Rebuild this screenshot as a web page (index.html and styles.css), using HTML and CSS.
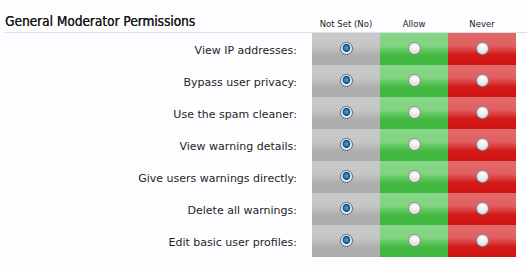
FILE: index.html
```html
<!DOCTYPE html>
<html>
<head>
<meta charset="utf-8">
<link rel="stylesheet" href="styles.css">
</head>
<body>
<div class="perms">
  <div class="head">
    <h3 class="title">General Moderator Permissions</h3>
    <div class="colhead">Not Set (No)</div>
    <div class="colhead">Allow</div>
    <div class="colhead">Never</div>
  </div>
  <div class="row">
    <div class="label">View IP addresses:</div>
    <div class="cell unset"><span class="radio on"></span></div>
    <div class="cell allow"><span class="radio"></span></div>
    <div class="cell never"><span class="radio"></span></div>
  </div>
  <div class="row">
    <div class="label">Bypass user privacy:</div>
    <div class="cell unset"><span class="radio on"></span></div>
    <div class="cell allow"><span class="radio"></span></div>
    <div class="cell never"><span class="radio"></span></div>
  </div>
  <div class="row">
    <div class="label">Use the spam cleaner:</div>
    <div class="cell unset"><span class="radio on"></span></div>
    <div class="cell allow"><span class="radio"></span></div>
    <div class="cell never"><span class="radio"></span></div>
  </div>
  <div class="row">
    <div class="label">View warning details:</div>
    <div class="cell unset"><span class="radio on"></span></div>
    <div class="cell allow"><span class="radio"></span></div>
    <div class="cell never"><span class="radio"></span></div>
  </div>
  <div class="row">
    <div class="label">Give users warnings directly:</div>
    <div class="cell unset"><span class="radio on"></span></div>
    <div class="cell allow"><span class="radio"></span></div>
    <div class="cell never"><span class="radio"></span></div>
  </div>
  <div class="row">
    <div class="label">Delete all warnings:</div>
    <div class="cell unset"><span class="radio on"></span></div>
    <div class="cell allow"><span class="radio"></span></div>
    <div class="cell never"><span class="radio"></span></div>
  </div>
  <div class="row">
    <div class="label">Edit basic user profiles:</div>
    <div class="cell unset"><span class="radio on"></span></div>
    <div class="cell allow"><span class="radio"></span></div>
    <div class="cell never"><span class="radio"></span></div>
  </div>
</div>
</body>
</html>
```
FILE: styles.css
```css
html, body {
  margin: 0;
  background: #fdfdff;
}
.perms {
  padding-left: 5px;
  font-family: "DejaVu Sans", Tahoma, sans-serif;
  color: #1a1a1a;
}
.head {
  display: flex;
  align-items: flex-end;
  height: 32px;
  border-bottom: 1px solid #d3e2ee;
}
.title {
  margin: 0;
  width: 307px;
  font-family: "DejaVu Sans Condensed", "DejaVu Sans", sans-serif;
  font-size: 13.5px;
  font-weight: normal;
  color: #1a1a1a;
  line-height: 16px;
  padding-bottom: 3px;
  text-shadow: 0.3px 0 0 #1a1a1a;
}
.colhead {
  width: 68px;
  text-align: center;
  font-size: 8.5px;
  line-height: 12px;
  padding-bottom: 2px;
  color: #222;
}
.row {
  display: flex;
  height: 32px;
}
.label {
  width: 292px;
  padding-right: 15px;
  padding-top: 3px;
  text-align: right;
  font-size: 11px;
  line-height: 30px;
  color: #1e1e1e;
}
.cell {
  width: 68px;
  display: flex;
  justify-content: center;
  padding-top: 9px;
  box-sizing: border-box;
}
.unset {
  background: linear-gradient(to bottom, #c9c9c9 0%, #c6c6c6 40%, #afafaf 68%, #acacac 100%);
}
.allow {
  background: linear-gradient(to bottom, #86d786 0%, #80d480 40%, #44bb44 68%, #3db83d 100%);
}
.never {
  background: linear-gradient(to bottom, #e36a6a 0%, #e06060 40%, #d11a1a 68%, #cf1212 100%);
}
.radio {
  width: 11px;
  height: 11px;
  border-radius: 50%;
  border: 1px solid #8a8a8a;
  background: radial-gradient(circle at 50% 35%, #ffffff 0%, #eeeeee 40%, #cfcfcf 100%);
  box-sizing: content-box;
}
.radio.on {
  border-color: #4e6b86;
  background: radial-gradient(circle at 50% 45%, #55a8d8 0%, #1c6fa5 32%, #0f3f66 45%, #f2f4f6 52%, #dcdfe2 100%);
}
```
